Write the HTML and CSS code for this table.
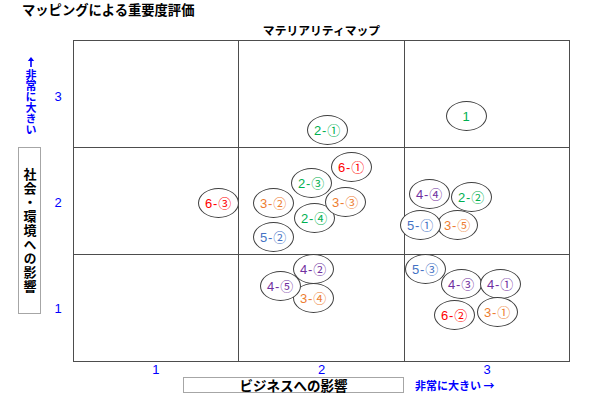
FILE: index.html
```html
<!DOCTYPE html>
<html lang="ja">
<head>
<meta charset="utf-8">
<title>マッピングによる重要度評価</title>
<link rel="stylesheet" href="styles.css">
</head>
<body>
<div class="page">
  <div class="title">マッピングによる重要度評価</div>
  <div class="map-title">マテリアリティマップ</div>

  <div class="yaxis">
    <div class="yhint">
      <svg class="arrow-up" width="8" height="10" viewBox="0 0 8 10" aria-hidden="true">
        <polygon points="4,0 7.2,4 0.8,4" fill="#0000ff"/>
        <line x1="4" y1="3" x2="4" y2="10" stroke="#0000ff" stroke-width="1.6"/>
      </svg>
      <span class="vtext">非常に大きい</span>
    </div>
    <div class="ylabel"><span>社会・環境への影響</span></div>
  </div>

  <div class="yticks">
    <span>3</span><span>2</span><span>1</span>
  </div>

  <div class="plot">
    <div class="cell"></div><div class="cell"></div><div class="cell"></div>
    <div class="cell"></div><div class="cell"></div><div class="cell"></div>
    <div class="cell"></div><div class="cell"></div><div class="cell"></div>

    <div class="bubble green" style="left:373px;top:61px">1</div>
    <div class="bubble green" style="left:234px;top:75px">2-①</div>
    <div class="bubble red" style="left:258px;top:112px">6-①</div>
    <div class="bubble green" style="left:218px;top:128px">2-③</div>
    <div class="bubble red" style="left:125px;top:148px">6-③</div>
    <div class="bubble orange" style="left:180px;top:148px">3-②</div>
    <div class="bubble green" style="left:221px;top:163px">2-④</div>
    <div class="bubble orange" style="left:252px;top:147px">3-③</div>
    <div class="bubble blue" style="left:180px;top:182px">5-②</div>
    <div class="bubble purple" style="left:336px;top:139px">4-④</div>
    <div class="bubble green" style="left:378px;top:142px">2-②</div>
    <div class="bubble orange" style="left:364px;top:170px">3-⑤</div>
    <div class="bubble blue" style="left:327px;top:170px">5-①</div>
    <div class="bubble purple" style="left:220px;top:214px">4-②</div>
    <div class="bubble orange" style="left:220px;top:243px">3-④</div>
    <div class="bubble purple" style="left:187px;top:231px">4-⑤</div>
    <div class="bubble purple" style="left:368px;top:229px">4-③</div>
    <div class="bubble blue" style="left:332px;top:214px">5-③</div>
    <div class="bubble purple" style="left:407px;top:229px">4-①</div>
    <div class="bubble orange" style="left:404px;top:257px">3-①</div>
    <div class="bubble red" style="left:361px;top:260px">6-②</div>
  </div>

  <div class="xticks">
    <span>1</span><span>2</span><span>3</span>
  </div>

  <div class="xlabel-row">
    <div class="xlabel">ビジネスへの影響</div>
    <div class="xhint">非常に大きい →</div>
  </div>
</div>
</body>
</html>
```

FILE: styles.css
```css
* {
  box-sizing: border-box;
}

html, body {
  margin: 0;
  padding: 0;
  background: #ffffff;
}

body {
  width: 602px;
  height: 411px;
  overflow: hidden;
  font-family: "Liberation Sans", "Noto Sans CJK JP", sans-serif;
  color: #000000;
}

.page {
  display: grid;
  grid-template-columns: 18px 23px 32px 497px 1fr;
  grid-template-rows: 20px 20px 322px 15px 20px;
}

.title {
  grid-column: 1 / -1;
  grid-row: 1;
  padding-left: 22px;
  font-family: "Noto Sans CJK JP", sans-serif;
  font-weight: bold;
  font-size: 13.3px;
  line-height: 20px;
}

.map-title {
  grid-column: 4;
  grid-row: 2;
  text-align: center;
  font-family: "Noto Sans CJK JP", sans-serif;
  font-weight: bold;
  font-size: 11.8px;
  line-height: 20px;
}

.yaxis {
  grid-column: 2;
  grid-row: 3;
  display: flex;
  flex-direction: column;
  align-items: center;
  padding-top: 17px;
}

.yhint {
  display: flex;
  flex-direction: column;
  align-items: center;
  margin-left: 3px;
  font-family: "Noto Sans CJK JP", sans-serif;
  font-weight: bold;
  font-size: 11px;
  color: #0000ff;
}

.arrow-up {
  display: block;
  margin-bottom: 2px;
}

.vtext {
  writing-mode: vertical-rl;
  text-orientation: upright;
  white-space: nowrap;
  line-height: 12px;
}

.ylabel {
  margin-top: 12px;
  width: 23px;
  height: 167px;
  border: 1px solid #a6a6a6;
  display: flex;
  align-items: center;
  justify-content: center;
}

.ylabel span {
  writing-mode: vertical-rl;
  text-orientation: upright;
  white-space: nowrap;
  font-family: "Noto Sans CJK JP", sans-serif;
  font-weight: bold;
  font-size: 13px;
  line-height: 14px;
  letter-spacing: 1px;
}

.yticks {
  grid-column: 3;
  grid-row: 3;
  display: grid;
  grid-template-rows: repeat(3, 1fr);
  padding-top: 3px;
}

.yticks span,
.xticks span {
  display: flex;
  align-items: center;
  justify-content: center;
  color: #0000ff;
  font-size: 13px;
}

.yticks span {
  padding-left: 2px;
}

.plot {
  grid-column: 4;
  grid-row: 3;
  position: relative;
  display: grid;
  grid-template-columns: repeat(3, 1fr);
  grid-template-rows: repeat(3, 1fr);
  gap: 1px;
  padding: 1px;
  background: #4d4d4d;
}

.cell {
  background: #ffffff;
}

.bubble {
  position: absolute;
  width: 41px;
  height: 30px;
  border: 1px solid #3f3f3f;
  border-radius: 50%;
  background: #ffffff;
  display: flex;
  align-items: center;
  justify-content: center;
  font-size: 13px;
  letter-spacing: 0.8px;
  line-height: 1;
  white-space: nowrap;
}

.green { color: #00b050; }
.red { color: #ff0000; }
.orange { color: #ed7d31; }
.blue { color: #4472c4; }
.purple { color: #7030a0; }

.xticks {
  grid-column: 4;
  grid-row: 4;
  display: grid;
  grid-template-columns: repeat(3, 1fr);
  height: 15px;
  line-height: 14px;
}

.xlabel-row {
  grid-column: 4 / -1;
  grid-row: 5;
  display: flex;
  align-items: flex-start;
  padding-left: 110px;
  gap: 11px;
}

.xlabel {
  width: 221px;
  height: 16px;
  border: 1px solid #a6a6a6;
  text-align: center;
  font-family: "Noto Sans CJK JP", sans-serif;
  font-weight: bold;
  font-size: 13.5px;
  line-height: 14px;
}

.xhint {
  font-family: "Noto Sans CJK JP", sans-serif;
  font-weight: bold;
  font-size: 11px;
  line-height: 16px;
  color: #0000ff;
  white-space: nowrap;
}
```
